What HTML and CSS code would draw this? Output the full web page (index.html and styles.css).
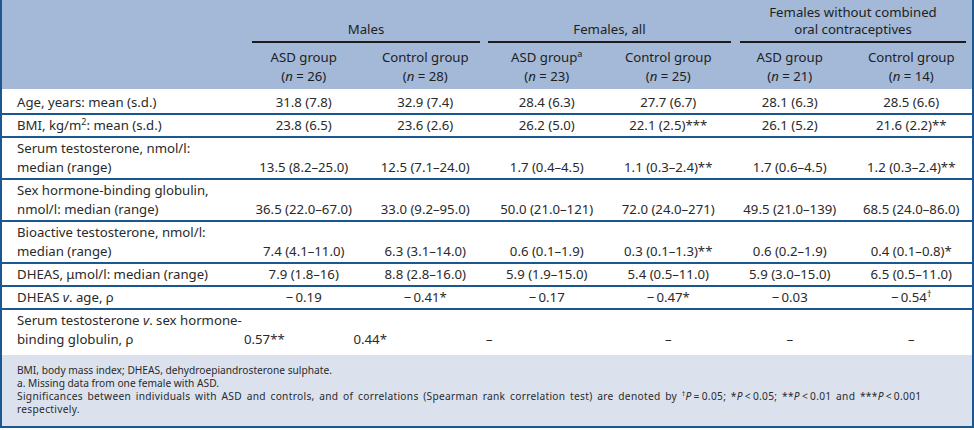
FILE: index.html
```html
<!DOCTYPE html>
<html lang="en">
<head>
<meta charset="utf-8">
<title>Hormone table</title>
<link rel="stylesheet" href="styles.css">
</head>
<body>
<div class="table-wrap">
  <table class="data">
    <colgroup>
      <col class="c-label">
      <col span="6" class="c-data">
    </colgroup>
    <thead>
      <tr class="group-row">
        <th></th>
        <th colspan="2"><div class="group g-males">Males</div></th>
        <th colspan="2"><div class="group g-fem">Females, all</div></th>
        <th colspan="2"><div class="group g-femoc">Females without combined<br>oral contraceptives</div></th>
      </tr>
      <tr class="sub-row">
        <th></th>
        <th>ASD group<br>(<i>n</i> = 26)</th>
        <th>Control group<br>(<i>n</i> = 28)</th>
        <th>ASD group<sup>a</sup><br>(<i>n</i> = 23)</th>
        <th>Control group<br>(<i>n</i> = 25)</th>
        <th>ASD group<br>(<i>n</i> = 21)</th>
        <th>Control group<br>(<i>n</i> = 14)</th>
      </tr>
    </thead>
    <tbody>
      <tr>
        <td class="label">Age, years: mean (s.d.)</td>
        <td>31.8 (7.8)</td><td>32.9 (7.4)</td><td>28.4 (6.3)</td><td>27.7 (6.7)</td><td>28.1 (6.3)</td><td>28.5 (6.6)</td>
      </tr>
      <tr>
        <td class="label">BMI, kg/m<sup>2</sup>: mean (s.d.)</td>
        <td>23.8 (6.5)</td><td>23.6 (2.6)</td><td>26.2 (5.0)</td><td>22.1 (2.5)***</td><td>26.1 (5.2)</td><td>21.6 (2.2)**</td>
      </tr>
      <tr>
        <td class="label">Serum testosterone, nmol/l:<br>median (range)</td>
        <td>13.5 (8.2–25.0)</td><td>12.5 (7.1–24.0)</td><td>1.7 (0.4–4.5)</td><td>1.1 (0.3–2.4)**</td><td>1.7 (0.6–4.5)</td><td>1.2 (0.3–2.4)**</td>
      </tr>
      <tr>
        <td class="label">Sex hormone-binding globulin,<br>nmol/l: median (range)</td>
        <td>36.5 (22.0–67.0)</td><td>33.0 (9.2–95.0)</td><td>50.0 (21.0–121)</td><td>72.0 (24.0–271)</td><td>49.5 (21.0–139)</td><td>68.5 (24.0–86.0)</td>
      </tr>
      <tr>
        <td class="label">Bioactive testosterone, nmol/l:<br>median (range)</td>
        <td>7.4 (4.1–11.0)</td><td>6.3 (3.1–14.0)</td><td>0.6 (0.1–1.9)</td><td>0.3 (0.1–1.3)**</td><td>0.6 (0.2–1.9)</td><td>0.4 (0.1–0.8)*</td>
      </tr>
      <tr>
        <td class="label">DHEAS, μmol/l: median (range)</td>
        <td>7.9 (1.8–16)</td><td>8.8 (2.8–16.0)</td><td>5.9 (1.9–15.0)</td><td>5.4 (0.5–11.0)</td><td>5.9 (3.0–15.0)</td><td>6.5 (0.5–11.0)</td>
      </tr>
      <tr>
        <td class="label">DHEAS <i>v</i>. age, ρ</td>
        <td>−&#8201;0.19</td><td>−&#8201;0.41*</td><td>−&#8201;0.17</td><td>−&#8201;0.47*</td><td>−&#8201;0.03</td><td>−&#8201;0.54<sup>†</sup></td>
      </tr>
      <tr>
        <td class="label">Serum testosterone <i>v</i>. sex hormone-<br>binding globulin, ρ</td>
        <td class="shift-a">0.57**</td><td class="shift-b">0.44*</td><td class="shift-c">–</td><td>–</td><td>–</td><td>–</td>
      </tr>
    </tbody>
  </table>
  <div class="notes">
    <p>BMI, body mass index; DHEAS, dehydroepiandrosterone sulphate.</p>
    <p>a. Missing data from one female with ASD.</p>
    <p class="note-wide">Significances between individuals with ASD and controls, and of correlations (Spearman rank correlation test) are denoted by <sup>†</sup><i>P</i>&#8201;=&#8201;0.05; *<i>P</i>&#8201;&lt;&#8201;0.05; **<i>P</i>&#8201;&lt;&#8201;0.01 and ***<i>P</i>&#8201;&lt;&#8201;0.001<br>respectively.</p>
  </div>
</div>
</body>
</html>
```

FILE: styles.css
```css
* {
  box-sizing: border-box;
}

body {
  margin: 0;
  background: #ffffff;
  font-family: "Noto Sans", "Liberation Sans", sans-serif;
  color: #2a2a2a;
}

.table-wrap {
  width: 974px;
  border: 2px solid #1b5790;
  border-top: none;
}

.data {
  width: 100%;
  border-collapse: collapse;
  table-layout: fixed;
  font-size: 13.2px;
}

.c-label {
  width: 241px;
}

.data thead {
  background: #a3b9d7;
  color: #1e1e1e;
}

.data th {
  font-weight: normal;
  text-align: center;
  padding: 0;
}

.data i {
  font-style: italic;
}

.data sup,
.notes sup {
  font-size: 0.68em;
  line-height: 0;
  vertical-align: super;
}

.group-row th {
  padding-top: 4px;
  vertical-align: bottom;
  line-height: 17px;
}

.group {
  border-bottom: 2px solid #1c1c1c;
  padding-bottom: 3px;
}

.g-males {
  margin: 0 6px 0 9px;
}

.g-fem {
  margin: 0 -2px 0 2px;
}

.g-femoc {
  margin: 0 6px 0 11px;
}

.sub-row th {
  padding: 5px 0 3px;
  line-height: 19px;
  vertical-align: top;
}

.data td {
  padding: 1px 0;
  line-height: 19px;
  border-bottom: 2px solid #1b5790;
  text-align: center;
  vertical-align: bottom;
  white-space: nowrap;
}

.data td.label {
  text-align: left;
  padding-left: 15px;
}

.data tbody tr:first-child td {
  padding-top: 4px;
}

.data tbody tr:last-child td {
  border-bottom: none;
  padding-bottom: 6px;
}

.data td.shift-a {
  text-align: left;
  padding-left: 1px;
}

.data td.shift-b {
  text-align: left;
  text-indent: -11px;
}

.data td.shift-c {
  text-align: left;
}

.notes {
  background: #dbe2ee;
  font-size: 10.2px;
  line-height: 13px;
  padding: 9px 15px 10px;
  color: #2a2a2a;
}

.notes p {
  margin: 0;
  white-space: nowrap;
}

.notes .note-wide {
  letter-spacing: 0.3px;
  word-spacing: 1.7px;
}
```
